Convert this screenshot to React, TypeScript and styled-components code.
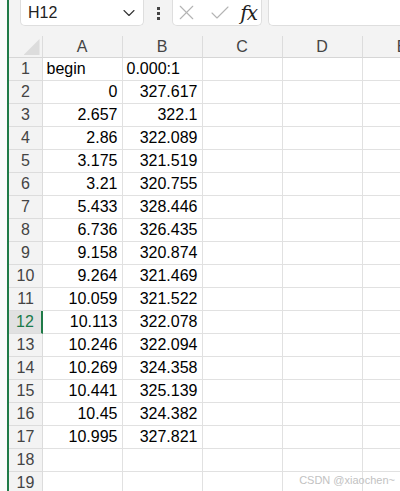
import React from 'react';
import styled, { createGlobalStyle } from 'styled-components';
import { ChevronDown, X, Check } from 'lucide-react';

const GlobalStyle = createGlobalStyle`
  html, body {
    margin: 0;
    padding: 0;
    background: #ffffff;
    overflow: hidden;
  }
  body {
    font-family: 'Liberation Sans', Arial, sans-serif;
    color: #000;
  }
`;

const Page = styled.div`
  position: relative;
  display: flex;
  width: 400px;
  height: 491px;
  overflow: hidden;
`;

const Gutter = styled.div`
  width: 7px;
  flex: none;
  background: #fbfbfb;
`;

const GreenRule = styled.div`
  width: 1.5px;
  flex: none;
  background: #1f7a47;
`;

const Main = styled.div`
  flex: 1;
  display: flex;
  flex-direction: column;
  min-width: 0;
  background: #f3f3f3;
`;

const Toolbar = styled.div`
  height: 36px;
  flex: none;
  display: flex;
  align-items: flex-start;
  padding-left: 11.5px;
`;

const Box = styled.div`
  height: 26px;
  box-sizing: border-box;
  background: #fff;
  border: 1px solid #dedede;
  border-top: none;
  border-radius: 0 0 5px 5px;
  display: flex;
  align-items: center;
`;

const NameBox = styled(Box)`
  width: 124px;
  padding: 0 4px 0 7px;
  justify-content: space-between;
  font-size: 16px;
  color: #222;
`;

const Dots = styled.div`
  width: 28px;
  height: 26px;
  display: flex;
  flex-direction: column;
  align-items: center;
  justify-content: center;
  gap: 2px;

  span {
    width: 3px;
    height: 3px;
    background: #444;
  }
`;

const FormulaTools = styled(Box)`
  width: 90px;
  padding: 0 4px 0 1px;
  justify-content: space-between;
`;

const Fx = styled.span`
  font-family: 'DejaVu Serif', 'Liberation Serif', serif;
  font-style: italic;
  font-size: 20px;
  color: #222;
  letter-spacing: -1px;
  line-height: 1;
`;

const FormulaInput = styled(Box)`
  flex: 1;
  margin-left: 6px;
  border-right: none;
  border-radius: 0 0 0 5px;
`;

const Grid = styled.div`
  display: grid;
  grid-template-columns: 34px repeat(5, 80px);
  grid-template-rows: 22px;
  grid-auto-rows: 23px;
  background: #fff;
`;

const HeadCell = styled.div`
  box-sizing: border-box;
  background: #f3f3f3;
  border-right: 1px solid #dcdcdc;
  border-bottom: 1px solid #d6d6d6;
  display: flex;
  align-items: center;
  justify-content: center;
  font-size: 16px;
  color: #444;
`;

const Corner = styled(HeadCell)`
  position: relative;
  &::after {
    content: '';
    position: absolute;
    right: 2px;
    bottom: 2px;
    width: 16px;
    height: 16px;
    background: #dcdcdc;
    clip-path: polygon(100% 0, 100% 100%, 0 100%);
  }
`;

const RowHead = styled.div<{ $active?: boolean }>`
  box-sizing: border-box;
  background: ${(p) => (p.$active ? '#e1e1e1' : '#f3f3f3')};
  color: ${(p) => (p.$active ? '#1b7a4a' : '#444')};
  border-right: ${(p) => (p.$active ? '2px solid #1f7a47' : '1px solid #dcdcdc')};
  border-bottom: 1px solid #dcdcdc;
  display: flex;
  align-items: center;
  justify-content: center;
  font-size: 16px;
  padding-left: 1px;
`;

const Cell = styled.div<{ $align?: 'left' | 'right' }>`
  box-sizing: border-box;
  border-right: 1px solid #e1e1e1;
  border-bottom: 1px solid #e1e1e1;
  display: flex;
  align-items: center;
  justify-content: ${(p) => (p.$align === 'left' ? 'flex-start' : 'flex-end')};
  padding: 0 4px 0 4px;
  font-size: 16px;
  white-space: nowrap;
  overflow: hidden;
  color: #000;
`;

const Watermark = styled.div`
  position: absolute;
  right: 5px;
  bottom: 5px;
  font-size: 11px;
  color: #c2c2c2;
  font-family: 'Liberation Sans', Arial, sans-serif;
`;

const rows: [string, string][] = [
  ['begin', '0.000:1'],
  ['0', '327.617'],
  ['2.657', '322.1'],
  ['2.86', '322.089'],
  ['3.175', '321.519'],
  ['3.21', '320.755'],
  ['5.433', '328.446'],
  ['6.736', '326.435'],
  ['9.158', '320.874'],
  ['9.264', '321.469'],
  ['10.059', '321.522'],
  ['10.113', '322.078'],
  ['10.246', '322.094'],
  ['10.269', '324.358'],
  ['10.441', '325.139'],
  ['10.45', '324.382'],
  ['10.995', '327.821'],
  ['', ''],
  ['', ''],
];

const isText = (v: string) => v !== '' && isNaN(Number(v));

export default function App() {
  return (
    <>
      <GlobalStyle />
      <Page>
        <Gutter />
        <GreenRule />
        <Main>
          <Toolbar>
            <NameBox>
              <span>H12</span>
              <ChevronDown size={20} strokeWidth={1.3} color="#333" />
            </NameBox>
            <Dots>
              <span />
              <span />
              <span />
            </Dots>
            <FormulaTools>
              <X size={25} strokeWidth={1.1} color="#b4b4b4" />
              <Check size={24} strokeWidth={1.1} color="#b4b4b4" />
              <Fx>fx</Fx>
            </FormulaTools>
            <FormulaInput />
          </Toolbar>
          <Grid>
            <Corner />
            {['A', 'B', 'C', 'D', 'E'].map((c) => (
              <HeadCell key={c}>{c}</HeadCell>
            ))}
            {rows.map(([a, b], i) => (
              <React.Fragment key={i}>
                <RowHead $active={i === 11}>{i + 1}</RowHead>
                <Cell $align={isText(a) ? 'left' : 'right'}>{a}</Cell>
                <Cell $align={isText(b) ? 'left' : 'right'}>{b}</Cell>
                <Cell />
                <Cell />
                <Cell />
              </React.Fragment>
            ))}
          </Grid>
        </Main>
        <Watermark>CSDN @xiaochen~</Watermark>
      </Page>
    </>
  );
}
